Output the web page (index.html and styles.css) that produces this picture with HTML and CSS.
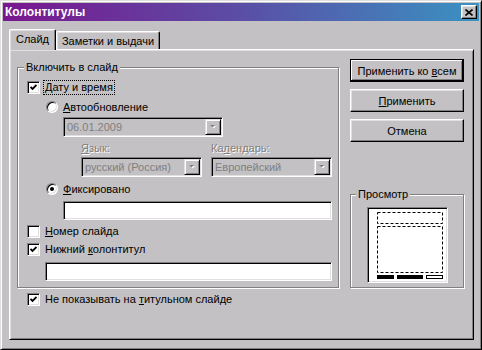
FILE: index.html
```html
<!DOCTYPE html>
<html lang="ru">
<head>
    <meta charset="UTF-8">
    <title>Колонтитулы</title>
    <link rel="stylesheet" href="styles.css">
</head>
<body>
    <div class="window">
        <div class="titlebar">
            <span class="title">Колонтитулы</span>
            <span class="close">
                <svg width="8" height="7" viewBox="0 0 8 7"><path d="M0.5 0.5 L7.5 6.5 M7.5 0.5 L0.5 6.5" stroke="#000" stroke-width="1.6"/></svg>
            </span>
        </div>

        <div class="tabs">
            <div class="tab active">Слайд</div>
            <div class="tab">Заметки и выдачи</div>
        </div>

        <div class="panel">
            <div class="left">
                <fieldset class="group main-group">
                    <legend>Включить в слайд</legend>

                    <div class="row check-row row-date">
                        <span class="checkbox checked"><svg width="7" height="7" viewBox="0 0 7 7"><path d="M0.5 3 L2.5 5 L6.5 1" fill="none" stroke="#000" stroke-width="1.8"/></svg></span>
                        <span class="lbl focus"><u>Д</u>ату и время</span>
                    </div>

                    <div class="row radio-row row-auto">
                        <span class="radio"></span>
                        <span class="lbl"><u>А</u>втообновление</span>
                    </div>

                    <div class="combo combo-date">
                        <span class="combo-text">06.01.2009</span>
                        <span class="combo-btn"><svg width="7" height="5" viewBox="0 0 7 5"><path d="M1 1 H6 L3.5 3.5 Z" fill="#fff"/><path d="M0 0 H5 L2.5 2.5 Z" fill="#808080"/></svg></span>
                    </div>

                    <div class="row row-labels">
                        <span class="dis-lbl lang-lbl"><u>Я</u>зык:</span>
                        <span class="dis-lbl">Ка<u>л</u>ендарь:</span>
                    </div>

                    <div class="row row-combos">
                        <div class="combo combo-half">
                            <span class="combo-text">русский (Россия)</span>
                            <span class="combo-btn"><svg width="7" height="5" viewBox="0 0 7 5"><path d="M1 1 H6 L3.5 3.5 Z" fill="#fff"/><path d="M0 0 H5 L2.5 2.5 Z" fill="#808080"/></svg></span>
                        </div>
                        <div class="combo combo-half">
                            <span class="combo-text">Европейский</span>
                            <span class="combo-btn"><svg width="7" height="5" viewBox="0 0 7 5"><path d="M1 1 H6 L3.5 3.5 Z" fill="#fff"/><path d="M0 0 H5 L2.5 2.5 Z" fill="#808080"/></svg></span>
                        </div>
                    </div>

                    <div class="row radio-row row-fixed">
                        <span class="radio selected"></span>
                        <span class="lbl"><u>Ф</u>иксировано</span>
                    </div>

                    <div class="textbox textbox-fixed"></div>

                    <div class="row check-row row-number">
                        <span class="checkbox"></span>
                        <span class="lbl"><u>Н</u>омер слайда</span>
                    </div>

                    <div class="row check-row row-footer">
                        <span class="checkbox checked"><svg width="7" height="7" viewBox="0 0 7 7"><path d="M0.5 3 L2.5 5 L6.5 1" fill="none" stroke="#000" stroke-width="1.8"/></svg></span>
                        <span class="lbl">Нижний <u>к</u>олонтитул</span>
                    </div>

                    <div class="textbox textbox-footer"></div>
                </fieldset>

                <div class="row check-row row-title">
                    <span class="checkbox checked"><svg width="7" height="7" viewBox="0 0 7 7"><path d="M0.5 3 L2.5 5 L6.5 1" fill="none" stroke="#000" stroke-width="1.8"/></svg></span>
                    <span class="lbl">Не показывать на <u>т</u>итульном слайде</span>
                </div>
            </div>

            <div class="right">
                <div class="btn default"><span>Применить ко <u>в</u>сем</span></div>
                <div class="btn"><span><u>П</u>рименить</span></div>
                <div class="btn"><span>Отмена</span></div>

                <fieldset class="group preview-group">
                    <legend>Просмотр</legend>
                    <div class="preview">
                        <svg width="77" height="72" viewBox="0 0 77 72">
                            <rect x="8.5" y="3.5" width="65" height="11" fill="none" stroke="#000" stroke-dasharray="3 2"/>
                            <rect x="8.5" y="17.5" width="65" height="46" fill="none" stroke="#000" stroke-dasharray="3 2"/>
                            <rect x="8" y="66" width="17" height="4" fill="#000"/>
                            <rect x="28" y="66" width="26" height="4" fill="#000"/>
                            <rect x="57.5" y="66.5" width="16" height="3" fill="#fff" stroke="#000"/>
                        </svg>
                    </div>
                </fieldset>
            </div>
        </div>
    </div>
</body>
</html>
```

FILE: styles.css
```css
body {
    margin: 0;
    background: #c3c1c3;
    font-family: "Liberation Sans", Arial, sans-serif;
    font-size: 11px;
    color: #000;
}
u {
    text-underline-offset: 1px;
}
.window {
    box-sizing: border-box;
    width: 482px;
    height: 350px;
    padding: 2px;
    border: 1px solid;
    border-color: #dfdfdf #000 #000 #dfdfdf;
    box-shadow: inset 1px 1px 0 #fff, inset -1px -1px 0 #808080;
    background: #c3c1c3;
}
.titlebar {
    height: 18px;
    display: flex;
    align-items: center;
    justify-content: space-between;
    padding: 0 2px 0 2px;
    background: linear-gradient(90deg, #7a168e 0%, #5a4ea6 50%, #3a92c2 100%);
}
.title {
    color: #fff;
    font-weight: bold;
    font-size: 12px;
}
.close {
    box-sizing: border-box;
    width: 16px;
    height: 14px;
    display: flex;
    align-items: center;
    justify-content: center;
    background: #c3c1c3;
    border: 1px solid;
    border-color: #fff #000 #000 #fff;
    box-shadow: inset -1px -1px 0 #808080, inset 1px 1px 0 #dfdfdf;
}

/* tabs */
.tabs {
    display: flex;
    align-items: flex-end;
    height: 21px;
    margin-top: 8px;
    padding-left: 6px;
    position: relative;
    z-index: 1;
}
.tab {
    box-sizing: border-box;
    height: 18px;
    width: 104px;
    margin-bottom: 1px;
    display: flex;
    align-items: center;
    justify-content: center;
    background: #c3c1c3;
    border-top: 1px solid #fff;
    border-left: 1px solid #fff;
    border-right: 1px solid #000;
    border-radius: 2px 2px 0 0;
    box-shadow: inset -1px 0 0 #808080, inset 1px 1px 0 #dfdfdf;
}
.tab.active {
    width: 47px;
    height: 21px;
    margin-bottom: 0;
    padding-bottom: 2px;
}

.panel {
    box-sizing: border-box;
    width: 465px;
    height: 291px;
    margin: -1px 0 0 6px;
    padding: 9px 0 0 7px;
    display: flex;
    align-items: flex-start;
    border: 1px solid;
    border-color: #fff #000 #000 #fff;
    box-shadow: inset 1px 1px 0 #dfdfdf, inset -1px -1px 0 #808080;
}
.left {
    width: 322px;
    margin-top: 2px;
}
.right {
    width: 114px;
    margin-left: 11px;
}

/* group boxes */
.group {
    box-sizing: border-box;
    min-width: 0;
    margin: 0;
    padding: 0 0 6px 0;
    border: 1px solid #808080;
    box-shadow: 1px 1px 0 #fff, inset 1px 1px 0 #fff;
}
.group legend {
    margin-left: 6px;
    padding: 0 2px;
    line-height: 13px;
    background: #c3c1c3;
}
.main-group {
    width: 322px;
}

.row {
    display: flex;
    align-items: center;
    height: 16px;
}
.check-row {
    margin-left: 9px;
}
.radio-row {
    margin-left: 28px;
}
.lbl {
    margin-left: 3px;
    padding: 0 1px;
    line-height: 13px;
    border: 1px solid transparent;
}
.lbl.focus {
    border: 1px dotted #000;
}
.row-date { margin-top: 5px; }
.row-auto { margin-top: 4px; }
.row-labels {
    height: 14px;
    margin: 4px 0 0 63px;
}
.row-combos {
    height: 20px;
    margin: 2px 0 0 63px;
    gap: 9px;
}
.row-fixed { margin-top: 4px; }
.row-number { margin-top: 3px; }
.row-footer { margin-top: 2px; }
.row-title {
    margin: 3px 0 0 10px;
}

.checkbox {
    box-sizing: border-box;
    width: 13px;
    height: 13px;
    display: flex;
    align-items: center;
    justify-content: center;
    background: #fff;
    border: 1px solid;
    border-color: #808080 #fff #fff #808080;
    box-shadow: inset 1px 1px 0 #000, inset -1px -1px 0 #dfdfdf;
}
.radio {
    box-sizing: border-box;
    width: 12px;
    height: 12px;
    border-radius: 50%;
    background: #fff;
    border: 1px solid;
    border-color: #808080 #fff #fff #808080;
    box-shadow: inset 1px 1px 0 #000, inset -1px -1px 0 #dfdfdf;
    display: flex;
    align-items: center;
    justify-content: center;
}
.radio.selected::after {
    content: "";
    width: 4px;
    height: 4px;
    border-radius: 50%;
    background: #000;
}

.dis-lbl {
    color: #808080;
    text-shadow: 1px 1px 0 #fff;
}
.lang-lbl {
    width: 130px;
}

.combo {
    box-sizing: border-box;
    height: 20px;
    padding: 1px;
    display: flex;
    align-items: center;
    color: #808080;
    border: 1px solid;
    border-color: #808080 #fff #fff #808080;
    box-shadow: inset 1px 1px 0 #000, inset -1px -1px 0 #dfdfdf;
}
.combo-date {
    width: 160px;
    margin: 2px 0 0 45px;
}
.combo-half {
    width: 121px;
}
.combo-text {
    flex: 1;
    padding-left: 2px;
    white-space: nowrap;
}
.combo-btn {
    box-sizing: border-box;
    width: 16px;
    height: 16px;
    display: flex;
    align-items: center;
    justify-content: center;
    border: 1px solid;
    border-color: #dfdfdf #000 #000 #dfdfdf;
    box-shadow: inset 1px 1px 0 #fff, inset -1px -1px 0 #808080;
    background: #c3c1c3;
}

.textbox {
    box-sizing: border-box;
    height: 19px;
    background: #fff;
    border: 1px solid;
    border-color: #808080 #fff #fff #808080;
    box-shadow: inset 1px 1px 0 #000, inset -1px -1px 0 #dfdfdf;
}
.textbox-fixed {
    width: 269px;
    margin: 4px 0 0 45px;
}
.textbox-footer {
    width: 287px;
    margin: 5px 0 0 27px;
}

/* buttons */
.btn {
    box-sizing: border-box;
    width: 114px;
    height: 23px;
    margin-bottom: 7px;
    display: flex;
    align-items: center;
    justify-content: center;
    white-space: nowrap;
    border: 1px solid;
    border-color: #fff #000 #000 #fff;
    box-shadow: inset -1px -1px 0 #808080, inset 1px 1px 0 #dfdfdf;
}
.btn.default {
    border-color: #000;
    box-shadow: inset -1px -1px 0 #000, inset 1px 1px 0 #fff, inset -2px -2px 0 #808080;
}

.preview-group {
    width: 114px;
    height: 100px;
    margin-top: 46px;
}
.preview-group legend {
    margin-left: 5px;
}
.preview {
    box-sizing: border-box;
    width: 81px;
    height: 76px;
    margin: 6px 0 0 16px;
    padding: 1px;
    background: #fff;
    border: 1px solid;
    border-color: #808080 #fff #fff #808080;
    box-shadow: inset 1px 1px 0 #000, inset -1px -1px 0 #dfdfdf;
}
.preview svg {
    display: block;
}
```
